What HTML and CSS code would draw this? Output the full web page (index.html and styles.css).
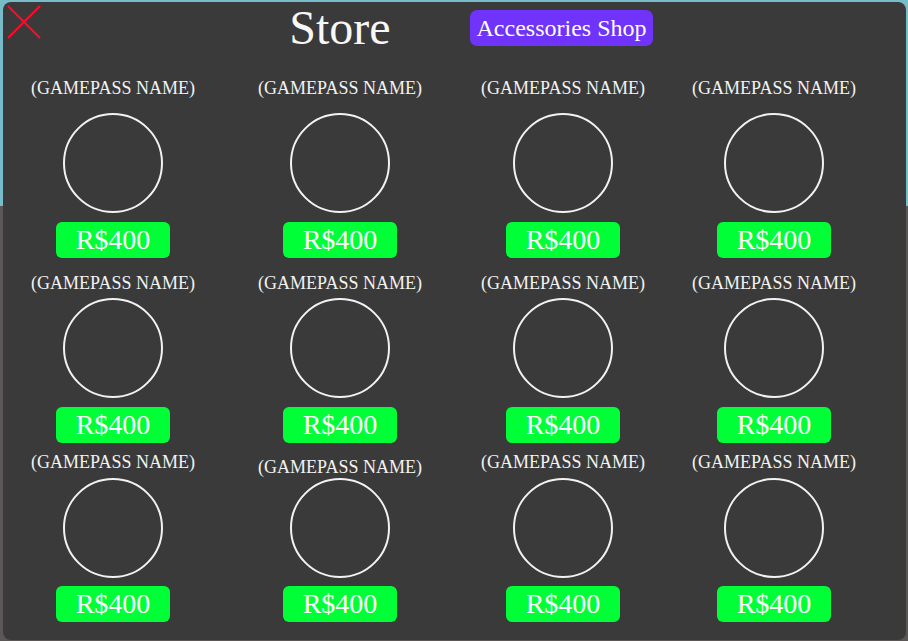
FILE: index.html
```html
<!DOCTYPE html>
<html lang="en">
<head>
    <meta charset="UTF-8">
    <title>Store</title>
    <meta name="viewport" content="width=device-width, initial-scale=1.0">
    <link rel="stylesheet" href="styles.css">
</head>
<body>
    <div class="store-panel">
        <div class="store-header">
            <button class="close-btn" aria-label="Close">
                <svg width="34" height="34" viewBox="0 0 34 34">
                    <line x1="1" y1="1" x2="33" y2="33" stroke="#ff0a2a" stroke-width="2.2"/>
                    <line x1="33" y1="1" x2="1" y2="33" stroke="#ff0a2a" stroke-width="2.2"/>
                </svg>
            </button>
            <h1 class="store-title">Store</h1>
            <button class="shop-btn">Accessories Shop</button>
        </div>

        <div class="pass-row row-1">
            <div class="pass-card"><div class="pass-name">(GAMEPASS NAME)</div><div class="pass-icon"></div><button class="price-btn">R$400</button></div>
            <div class="pass-card"><div class="pass-name">(GAMEPASS NAME)</div><div class="pass-icon"></div><button class="price-btn">R$400</button></div>
            <div class="pass-card"><div class="pass-name">(GAMEPASS NAME)</div><div class="pass-icon"></div><button class="price-btn">R$400</button></div>
            <div class="pass-card"><div class="pass-name">(GAMEPASS NAME)</div><div class="pass-icon"></div><button class="price-btn">R$400</button></div>
        </div>

        <div class="pass-row row-2">
            <div class="pass-card"><div class="pass-name">(GAMEPASS NAME)</div><div class="pass-icon"></div><button class="price-btn">R$400</button></div>
            <div class="pass-card"><div class="pass-name">(GAMEPASS NAME)</div><div class="pass-icon"></div><button class="price-btn">R$400</button></div>
            <div class="pass-card"><div class="pass-name">(GAMEPASS NAME)</div><div class="pass-icon"></div><button class="price-btn">R$400</button></div>
            <div class="pass-card"><div class="pass-name">(GAMEPASS NAME)</div><div class="pass-icon"></div><button class="price-btn">R$400</button></div>
        </div>

        <div class="pass-row row-3">
            <div class="pass-card"><div class="pass-name">(GAMEPASS NAME)</div><div class="pass-icon"></div><button class="price-btn">R$400</button></div>
            <div class="pass-card"><div class="pass-name name-low">(GAMEPASS NAME)</div><div class="pass-icon"></div><button class="price-btn">R$400</button></div>
            <div class="pass-card"><div class="pass-name">(GAMEPASS NAME)</div><div class="pass-icon"></div><button class="price-btn">R$400</button></div>
            <div class="pass-card"><div class="pass-name">(GAMEPASS NAME)</div><div class="pass-icon"></div><button class="price-btn">R$400</button></div>
        </div>
    </div>
</body>
</html>
```

FILE: styles.css
```css
* {
    margin: 0;
    padding: 0;
    box-sizing: border-box;
}

body {
    background: linear-gradient(to bottom, #79bcc9 0, #79bcc9 206px, #5c5757 206px);
    font-family: "Liberation Serif", "Times New Roman", serif;
    color: #f2f2f2;
    height: 100vh;
    overflow: hidden;
    padding: 2px 2px 1px 3px;
}

.store-panel {
    background: #3a3a3a;
    border-radius: 8px;
    height: 638px;
    padding-top: 8px;
}

.store-header,
.pass-row {
    display: grid;
    grid-template-columns: 220px 234px 212px 210px;
}

.store-header {
    height: 36px;
    align-items: center;
}

.close-btn {
    background: none;
    border: none;
    cursor: pointer;
    justify-self: start;
    align-self: start;
    margin-left: 4px;
    margin-top: -5px;
    line-height: 0;
}

.store-title {
    font-size: 48px;
    font-weight: normal;
    line-height: 36px;
    text-align: center;
    color: #f7f7f7;
}

.shop-btn {
    justify-self: start;
    margin-left: 13px;
    width: 183px;
    height: 36px;
    border: none;
    border-radius: 7px;
    background: #7033fa;
    color: #ffffff;
    font-family: inherit;
    font-size: 24px;
    cursor: pointer;
}

.pass-card {
    display: flex;
    flex-direction: column;
    align-items: center;
}

.pass-name {
    font-size: 18px;
    line-height: 22px;
    white-space: nowrap;
}

.pass-icon {
    width: 100px;
    height: 100px;
    border: 2.5px solid #f2f2f2;
    border-radius: 50%;
}

.price-btn {
    width: 114px;
    height: 36px;
    border: none;
    border-radius: 6px;
    background: #00ff37;
    color: #ffffff;
    font-family: inherit;
    font-size: 28px;
    line-height: 36px;
    cursor: pointer;
}

.row-1 { margin-top: 31px; }
.row-1 .pass-icon { margin: 14px 0 9px; }

.row-2 { margin-top: 14px; }
.row-2 .pass-icon { margin: 4px 0 9px; }

.row-3 { margin-top: 8px; }
.row-3 .pass-icon { margin: 5px 0 8px; }

.name-low {
    padding-top: 5px;
    margin-bottom: -5px;
}
```
